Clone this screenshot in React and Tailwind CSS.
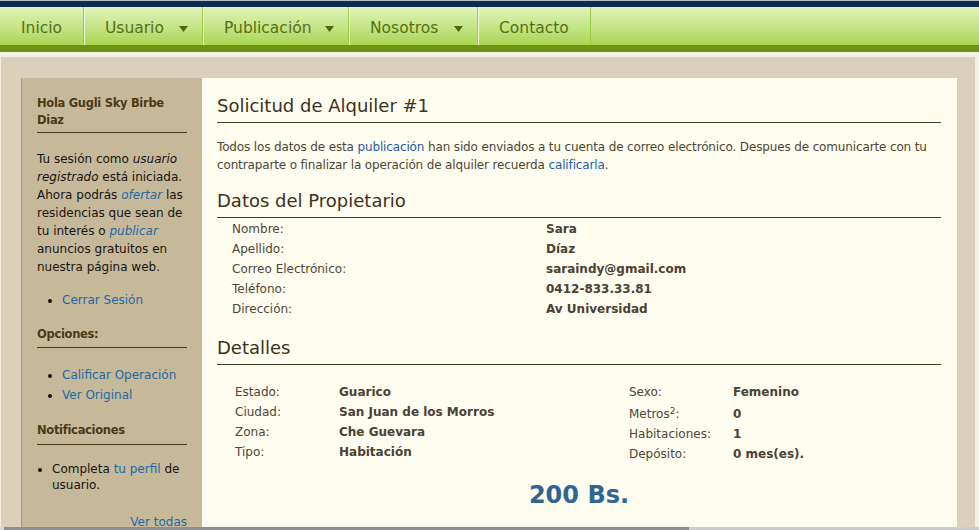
import React from "react";

const Tri = () => (
  <svg width="9" height="6" viewBox="0 0 9 6" className="shrink-0">
    <path d="M0 0 H9 L4.5 6 Z" fill="#4f6710" />
  </svg>
);

function NavItem({ label, w, drop, first }) {
  return (
    <div
      className={
        "h-full flex items-center justify-between pt-[5px] pl-[20px] pr-[14px] border-r border-r-[#9ccb45] " +
        (first ? "pl-[21px]" : "border-l border-l-[#f2fadf]")
      }
      style={{ width: w }}
    >
      <span className="text-[15.5px] text-[#587014]">{label}</span>
      {drop && <Tri />}
    </div>
  );
}

function SideHead({ children, className = "" }) {
  return (
    <div
      className={
        "text-[11.5px] leading-[17px] font-bold tracking-[-0.3px] text-[#4a3a16] border-b border-[#4a3a1a] " +
        className
      }
    >
      {children}
    </div>
  );
}

function Heading({ children, className = "" }) {
  return (
    <div
      className={
        "text-[18px] leading-[22px] text-[#3c3220] pb-[5px] border-b border-[#4a3c20] " +
        className
      }
    >
      {children}
    </div>
  );
}

function Row({ label, value, lw, h = "h-[20px] leading-[20px]" }) {
  return (
    <div className={"flex " + h}>
      <div className="shrink-0" style={{ width: lw }}>
        {label}
      </div>
      <div className="font-bold text-[#4a4233]">{value}</div>
    </div>
  );
}

export default function App() {
  return (
    <div
      className="relative h-[530px] overflow-hidden bg-[#f4efe3]"
      style={{ fontFamily: '"DejaVu Sans", Verdana, sans-serif' }}
    >
      <div className="h-px bg-[#b9bfc7]" />
      <div className="h-[6px] bg-[#0d2a4f]" />
      <nav className="h-[38px] flex bg-linear-to-b from-[#e2f4ba] to-[#a9d64f]">
        <NavItem label="Inicio" w={84} first />
        <NavItem label="Usuario" w={119} drop />
        <NavItem label="Publicación" w={146} drop />
        <NavItem label="Nosotros" w={129} drop />
        <NavItem label="Contacto" w={113} />
      </nav>
      <div className="h-[7px] bg-[#6a9411]" />
      <div className="h-[5px]" />
      <div className="ml-px mr-[4px] bg-[#dad0bb] pt-[21px] pl-[20px] pr-[18px] h-[480px]">
        <div className="flex h-full">
          {/* Sidebar */}
          <aside className="w-[181px] shrink-0 bg-[#c6b999] border-l border-[#a8987a] pl-[15px] pr-[15px] pt-[17px] text-[12px] text-[#161410]">
            <SideHead className="pb-[3px]">
              Hola Gugli Sky Birbe
              <br />
              Diaz
            </SideHead>
            <p className="mt-[17px] leading-[18px] whitespace-nowrap">
              Tu sesión como <i>usuario</i>
              <br />
              <i>registrado</i> está iniciada.
              <br />
              Ahora podrás <i className="text-[#1f68a8]">ofertar</i> las
              <br />
              residencias que sean de
              <br />
              tu interés o <i className="text-[#1f68a8]">publicar</i>
              <br />
              anuncios gratuitos en
              <br />
              nuestra página web.
            </p>
            <ul className="mt-[14px] list-disc pl-[25px] leading-[20px]">
              <li className="text-[#1f68a8] marker:text-[#161410]">Cerrar Sesión</li>
            </ul>
            <SideHead className="mt-[16px] pb-[4px]">Opciones:</SideHead>
            <ul className="mt-[17px] list-disc pl-[25px] leading-[20px]">
              <li className="text-[#1f68a8] marker:text-[#161410]">Calificar Operación</li>
              <li className="text-[#1f68a8] marker:text-[#161410]">Ver Original</li>
            </ul>
            <SideHead className="mt-[17px] pb-[5px]">Notificaciones</SideHead>
            <ul className="mt-[16px] list-disc pl-[15px] leading-[16px]">
              <li>
                Completa <span className="text-[#1f68a8]">tu perfil</span> de
                <br />
                usuario.
              </li>
            </ul>
            <div className="mt-[20px] leading-[18px] text-right text-[#1f68a8]">
              Ver todas
            </div>
          </aside>

          {/* Content */}
          <main className="flex-1 bg-[#fffcf0] pl-[15px] pr-[16px] pt-[17px] text-[12px] text-[#4e4636]">
            <Heading>Solicitud de Alquiler #1</Heading>
            <p className="mt-[15px] leading-[18px] whitespace-nowrap tracking-[-0.14px]">
              Todos los datos de esta{" "}
              <span className="text-[#1a5ea8]">publicación</span> han sido
              enviados a tu cuenta de correo electrónico. Despues de comunicarte
              con tu
              <br />
              contraparte o finalizar la operación de alquiler recuerda{" "}
              <span className="text-[#1a5ea8]">calificarla</span>.
            </p>
            <Heading className="mt-[16px]">Datos del Propietario</Heading>
            <div className="mt-[1px] pl-[15px]">
              <Row lw={314} label="Nombre:" value="Sara" />
              <Row lw={314} label="Apellido:" value="Díaz" />
              <Row lw={314} label="Correo Electrónico:" value="saraindy@gmail.com" />
              <Row lw={314} label="Teléfono:" value="0412-833.33.81" />
              <Row lw={314} label="Dirección:" value="Av Universidad" />
            </div>
            <Heading className="mt-[18px]">Detalles</Heading>
            <div className="mt-[17px] flex pl-[18px]">
              <div className="w-[394px] shrink-0">
                <Row lw={104} label="Estado:" value="Guarico" />
                <Row lw={104} label="Ciudad:" value="San Juan de los Morros" />
                <Row lw={104} label="Zona:" value="Che Guevara" />
                <Row lw={104} label="Tipo:" value="Habitación" />
              </div>
              <div>
                <Row lw={104} label="Sexo:" value="Femenino" />
                <Row
                  lw={104}
                  h="h-[22px] leading-[24px]"
                  label={
                    <span>
                      Metros<sup className="text-[9px]">2</sup>:
                    </span>
                  }
                  value="0"
                />
                <Row lw={104} label="Habitaciones:" value="1" />
                <Row lw={104} label="Depósito:" value="0 mes(es)." />
              </div>
            </div>
            <div className="mt-[17px] text-center text-[24px] leading-[29px] font-bold text-[#2e6594]">
              200 Bs.
            </div>
          </main>
        </div>
      </div>
      <div className="absolute left-0 right-0 bottom-0 h-[3px] flex">
        <div className="w-[4px] bg-[#d8d8d8]" />
        <div className="w-[685px] bg-[#8e8e8e]" />
        <div className="flex-1 bg-[#cdcdcd]" />
      </div>
    </div>
  );
}
